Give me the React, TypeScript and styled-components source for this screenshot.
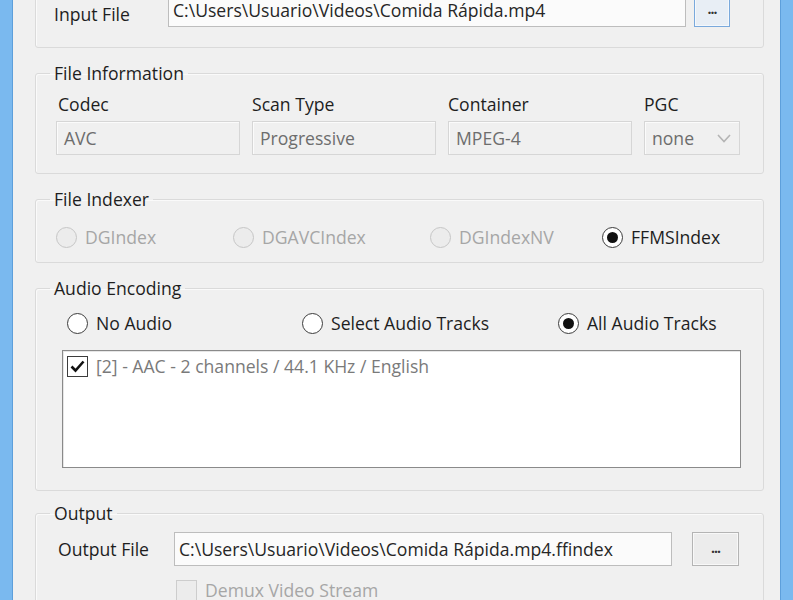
import React from "react";
import styled, { createGlobalStyle } from "styled-components";

const GlobalStyle = createGlobalStyle`
  html, body {
    margin: 0;
    padding: 0;
    background: #f0f0f0;
    overflow: hidden;
  }
  * {
    box-sizing: border-box;
  }
`;

const Window = styled.div`
  display: flex;
  height: 600px;
  overflow: hidden;
  font-family: "Open Sans", "Noto Sans", sans-serif;
  font-size: 17.6px;
  line-height: 22px;
  color: #1e1e1e;
`;

const Frame = styled.div<{ $side: "left" | "right" }>`
  width: 13px;
  flex: none;
  background: #7ab9ef;
  border-${(p) => (p.$side === "left" ? "right" : "left")}: 1px solid #5d9fdb;
`;

const Body = styled.div`
  flex: 1;
  display: flex;
  flex-direction: column;
  gap: 14px;
  margin-top: -24px;
  padding: 0 16px 0 22px;
  background: #f0f0f0;
`;

const Group = styled.fieldset<{ $pull?: number }>`
  margin: ${(p) => (p.$pull ? `-${p.$pull}px 0 0` : "0")};
  padding: 0;
  min-width: 0;
  border: 1px solid #dadada;
  border-radius: 3px;
  box-shadow: inset 1px 1px 0 #fafafa;
`;

const Legend = styled.legend`
  margin-left: 14px;
  padding: 0 4px;
  color: #1e1e1e;
`;

const GroupContent = styled.div<{ $pad: string }>`
  padding: ${(p) => p.$pad};
`;

const FileRow = styled.div<{ $cols: string }>`
  display: grid;
  grid-template-columns: ${(p) => p.$cols};
  align-items: center;
`;

const RowLabel = styled.span<{ $drop?: number }>`
  padding-top: ${(p) => p.$drop ?? 0}px;
  color: #1e1e1e;
  white-space: nowrap;
`;

const TextBox = styled.div`
  height: 34px;
  padding: 0 4px;
  display: flex;
  align-items: center;
  background: #fbfbfb;
  border: 1px solid #bdbdbd;
  color: #262626;
  white-space: nowrap;
  overflow: hidden;
`;

const BrowseButton = styled.button<{ $focused?: boolean; $gap: number }>`
  margin-left: ${(p) => p.$gap}px;
  height: 34px;
  padding: 0 0 4px;
  font-family: inherit;
  font-size: 14px;
  font-weight: 700;
  letter-spacing: -1px;
  color: #333;
  background: ${(p) => (p.$focused ? "#e8eef5" : "#ececec")};
  border: 1px solid ${(p) => (p.$focused ? "#7aa9dc" : "#b4b4b4")};
  box-shadow: inset 0 0 0 1px ${(p) => (p.$focused ? "#f4f8fc" : "#f8f8f8")};
`;

const InfoGrid = styled.div`
  display: grid;
  grid-template-columns: 184px 184px 184px 96px;
  column-gap: 12px;
  row-gap: 6px;
`;

const InfoLabel = styled.span<{ $shift?: number }>`
  padding-left: ${(p) => p.$shift ?? 2}px;
  color: #1e1e1e;
`;

const ReadOnlyBox = styled.div`
  height: 34px;
  display: flex;
  align-items: center;
  justify-content: space-between;
  padding: 0 8px 0 7px;
  color: #6d6d6d;
  background: #f0f0f0;
  border: 1px solid #d6d6d6;
  box-shadow: inset 1px 1px 0 #fbfbfb;
`;

const OptionRow = styled.div<{ $cols: string; $indent?: number }>`
  display: grid;
  grid-template-columns: ${(p) => p.$cols};
  align-items: center;
  padding-left: ${(p) => p.$indent ?? 0}px;
`;

const Option = styled.label<{ $disabled?: boolean }>`
  display: flex;
  align-items: center;
  gap: 8px;
  color: ${(p) => (p.$disabled ? "#a6a6a6" : "#1e1e1e")};
  white-space: nowrap;
`;

const RadioCircle = styled.span<{ $checked?: boolean; $disabled?: boolean }>`
  width: 21px;
  height: 21px;
  flex: none;
  border-radius: 50%;
  display: flex;
  align-items: center;
  justify-content: center;
  border: 1.5px solid ${(p) => (p.$disabled ? "#c6c6c6" : "#3c3c3c")};
  background: ${(p) => (p.$disabled ? "#ececec" : "#fff")};
  &::after {
    content: "";
    width: 11px;
    height: 11px;
    border-radius: 50%;
    background: ${(p) => (p.$checked ? "#111" : "transparent")};
  }
`;

const CheckSquare = styled.span<{ $disabled?: boolean }>`
  width: 21px;
  height: 21px;
  flex: none;
  display: flex;
  align-items: center;
  justify-content: center;
  border: 1.5px solid ${(p) => (p.$disabled ? "#cdcdcd" : "#3c3c3c")};
  background: ${(p) => (p.$disabled ? "#ececec" : "#fff")};
`;

const TrackList = styled.div`
  margin-top: 16px;
  height: 118px;
  padding: 4px 4px;
  background: #fff;
  border: 1px solid #8a8a8a;
  box-shadow: inset 1px 1px 0 #e6e6e6;
`;

const TrackItem = styled.div`
  display: flex;
  align-items: center;
  gap: 8px;
  color: #7a7a7a;
`;

const SubOption = styled.div`
  margin-top: 13px;
  padding-left: 118px;
`;

const Radio = ({ label, checked, disabled }: { label: string; checked?: boolean; disabled?: boolean }) => (
  <Option $disabled={disabled}>
    <RadioCircle $checked={checked} $disabled={disabled} />
    {label}
  </Option>
);

const CheckMark = () => (
  <svg width="15" height="13" viewBox="0 0 15 13">
    <path d="M1.5 6.5 L5.5 10.5 L13.5 1.5" fill="none" stroke="#111" strokeWidth="2.6" />
  </svg>
);

const Chevron = () => (
  <svg width="14" height="9" viewBox="0 0 14 9">
    <path d="M1 1 L7 7.5 L13 1" fill="none" stroke="#b4b4b4" strokeWidth="1.6" />
  </svg>
);

export default function App() {
  return (
    <>
      <GlobalStyle />
      <Window>
        <Frame $side="left" />
        <Body>
          <Group>
            <GroupContent $pad="16px 32px 20px 18px">
              <FileRow $cols="114px 518px 44px">
                <RowLabel $drop={7}>Input File</RowLabel>
                <TextBox>C:\Users\Usuario\Videos\Comida Rápida.mp4</TextBox>
                <BrowseButton $focused $gap={8}>...</BrowseButton>
              </FileRow>
            </GroupContent>
          </Group>

          <Group>
            <Legend>File Information</Legend>
            <GroupContent $pad="9px 20px 18px 20px">
              <InfoGrid>
                <InfoLabel>Codec</InfoLabel>
                <InfoLabel $shift={0}>Scan Type</InfoLabel>
                <InfoLabel $shift={0}>Container</InfoLabel>
                <InfoLabel $shift={0}>PGC</InfoLabel>
                <ReadOnlyBox>AVC</ReadOnlyBox>
                <ReadOnlyBox>Progressive</ReadOnlyBox>
                <ReadOnlyBox>MPEG-4</ReadOnlyBox>
                <ReadOnlyBox>
                  none
                  <Chevron />
                </ReadOnlyBox>
              </InfoGrid>
            </GroupContent>
          </Group>

          <Group>
            <Legend>File Indexer</Legend>
            <GroupContent $pad="16px 20px 14px 20px">
              <OptionRow $cols="177px 197px 172px auto">
                <Radio label="DGIndex" disabled />
                <Radio label="DGAVCIndex" disabled />
                <Radio label="DGIndexNV" disabled />
                <Radio label="FFMSIndex" checked />
              </OptionRow>
            </GroupContent>
          </Group>

          <Group>
            <Legend>Audio Encoding</Legend>
            <GroupContent $pad="13px 22px 22px 26px">
              <OptionRow $cols="235px 256px auto" $indent={5}>
                <Radio label="No Audio" />
                <Radio label="Select Audio Tracks" />
                <Radio label="All Audio Tracks" checked />
              </OptionRow>
              <TrackList>
                <TrackItem>
                  <CheckSquare>
                    <CheckMark />
                  </CheckSquare>
                  [2] - AAC - 2 channels / 44.1 KHz / English
                </TrackItem>
              </TrackList>
            </GroupContent>
          </Group>

          <Group $pull={3}>
            <Legend>Output</Legend>
            <GroupContent $pad="8px 20px 20px 22px">
              <FileRow $cols="116px 498px 67px">
                <RowLabel>Output File</RowLabel>
                <TextBox>C:\Users\Usuario\Videos\Comida Rápida.mp4.ffindex</TextBox>
                <BrowseButton $gap={20}>...</BrowseButton>
              </FileRow>
              <SubOption>
                <Option $disabled>
                  <CheckSquare $disabled />
                  Demux Video Stream
                </Option>
              </SubOption>
            </GroupContent>
          </Group>
        </Body>
        <Frame $side="right" />
      </Window>
    </>
  );
}
